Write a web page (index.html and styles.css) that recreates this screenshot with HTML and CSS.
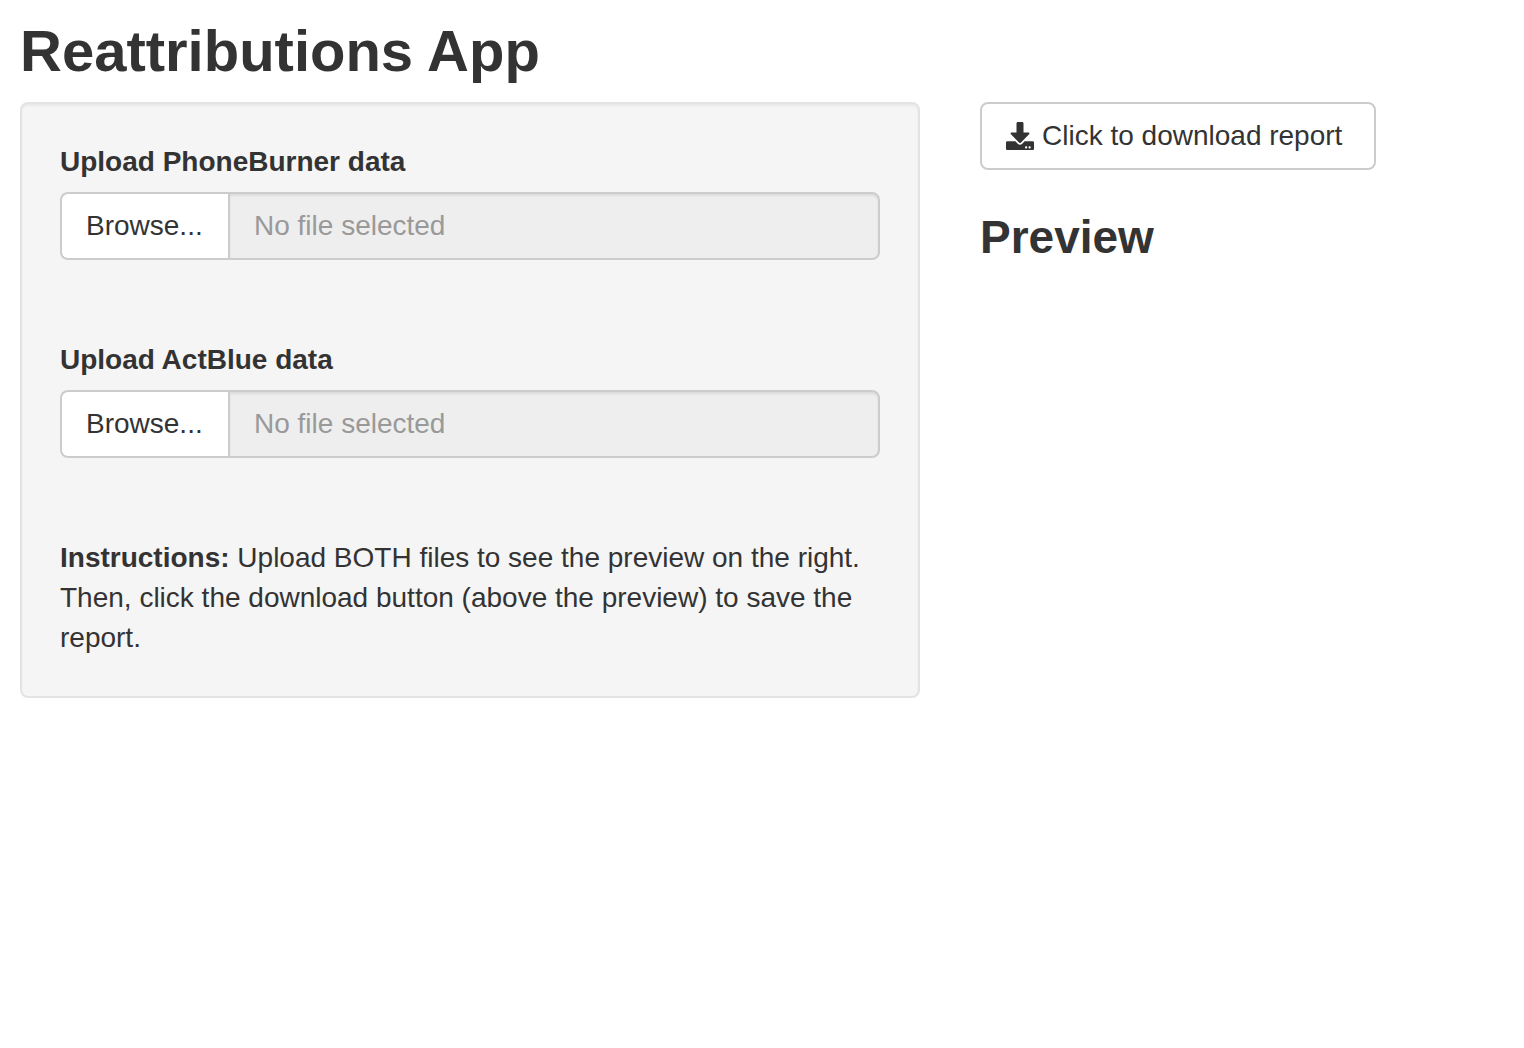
FILE: index.html
```html
<!DOCTYPE html>
<html lang="en">
<head>
  <meta charset="utf-8">
  <meta name="viewport" content="width=device-width, initial-scale=1">
  <title>Reattributions App</title>
  <link rel="stylesheet" href="styles.css">
</head>
<body>
  <h1 class="page-title">Reattributions App</h1>
  <div class="layout">
    <form class="sidebar">
      <div class="field">
        <label class="field-label" for="phoneburner">Upload PhoneBurner data</label>
        <div class="file-group">
          <label class="browse">Browse...<input class="file-input" type="file" id="phoneburner"></label>
          <input class="file-name" type="text" placeholder="No file selected" aria-label="Selected PhoneBurner file" readonly>
        </div>
      </div>
      <div class="field">
        <label class="field-label" for="actblue">Upload ActBlue data</label>
        <div class="file-group">
          <label class="browse">Browse...<input class="file-input" type="file" id="actblue"></label>
          <input class="file-name" type="text" placeholder="No file selected" aria-label="Selected ActBlue file" readonly>
        </div>
      </div>
      <p class="instructions"><strong>Instructions:</strong> Upload BOTH files to see the preview on the right. Then, click the download button (above the preview) to save the report.</p>
    </form>
    <main class="main">
      <button class="download" type="button">
        <svg class="icon" viewBox="0 0 512 512" aria-hidden="true"><path d="M216 0h80c13.300 0 24 10.700 24 24v168h87.700c17.800 0 26.700 21.500 14.100 34.100L269.700 378.300c-7.500 7.500-19.800 7.500-27.300 0L90.100 226.100c-12.600-12.600-3.700-34.100 14.100-34.100H192V24c0-13.300 10.700-24 24-24zm296 376v112c0 13.300-10.700 24-24 24H24c-13.300 0-24-10.700-24-24V376c0-13.300 10.700-24 24-24h146.700l49 49c20.100 20.100 52.500 20.100 72.600 0l49-49H488c13.300 0 24 10.700 24 24zm-124 88c0-11-9-20-20-20s-20 9-20 20 9 20 20 20 20-9 20-20zm64 0c0-11-9-20-20-20s-20 9-20 20 9 20 20 20 20-9 20-20z"/></svg>
        <span>Click to download report</span>
      </button>
      <h2 class="section-title">Preview</h2>
    </main>
  </div>
</body>
</html>
```
FILE: styles.css
```css
*,
*::before,
*::after {
  box-sizing: border-box;
}

body {
  margin: 0;
  padding: 0 20px;
  background: #fff;
  color: #333;
  font-family: "Helvetica Neue", "Liberation Sans", Arial, sans-serif;
  font-size: 28px;
  line-height: 40px;
}

.page-title {
  margin: 0;
  padding: 18px 0;
  font-size: 58px;
  font-weight: 700;
  line-height: 66px;
}

.layout {
  display: grid;
  grid-template-columns: minmax(0, 225fr) minmax(0, 131fr);
  gap: 60px;
  align-items: start;
}

.sidebar {
  padding: 38px;
  border: 2px solid #e3e3e3;
  border-radius: 8px;
  background: #f5f5f5;
  box-shadow: inset 0 2px 2px rgba(0, 0, 0, 0.05);
}

.field {
  margin-bottom: 80px;
}

.field-label {
  display: block;
  margin-bottom: 10px;
  font-weight: 700;
}

.file-group {
  display: flex;
  height: 68px;
}

.browse {
  position: relative;
  flex: none;
  min-width: 168px;
  padding: 12px 24px;
  border: 2px solid #ccc;
  border-right: 0;
  border-radius: 8px 0 0 8px;
  background: #fff;
  cursor: pointer;
}

.file-input {
  position: absolute;
  inset: 0;
  width: 100%;
  opacity: 0;
  cursor: pointer;
}

.file-name {
  flex: 1;
  min-width: 0;
  padding: 12px 24px;
  border: 2px solid #ccc;
  border-radius: 0 8px 8px 0;
  background: #eee;
  box-shadow: inset 0 2px 2px rgba(0, 0, 0, 0.075);
  color: #555;
  font: inherit;
}

.file-name::placeholder {
  color: #999;
  opacity: 1;
}

.instructions {
  margin: 0;
}

.download {
  display: flex;
  align-items: center;
  gap: 8px;
  min-width: 396px;
  height: 68px;
  padding: 0 24px;
  border: 2px solid #ccc;
  border-radius: 8px;
  background: #fff;
  color: #333;
  font: inherit;
  white-space: nowrap;
  cursor: pointer;
}

.icon {
  flex: none;
  width: 28px;
  height: 28px;
  fill: currentColor;
}

.section-title {
  margin: 40px 0 20px;
  font-size: 46px;
  font-weight: 700;
  line-height: 54px;
}
```
